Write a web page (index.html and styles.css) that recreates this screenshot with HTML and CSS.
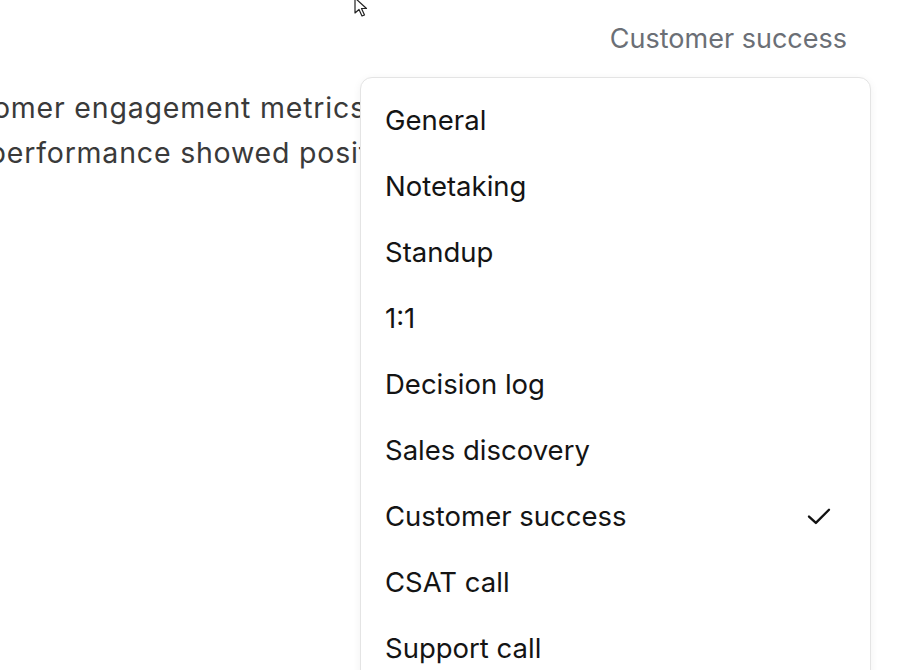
FILE: index.html
```html
<html>

<head>
    <meta http-equiv="Content-Type" content="text/html; charset=utf-8">
    <title>Meeting notes</title>

    <link rel="stylesheet" href="styles.css">
</head>

<body>
    <svg class="cursor" width="16" height="22" viewBox="0 0 16 22">
        <path d="M1 1 L1 16 L5 12.5 L8 19 L10.5 18 L7.5 11.5 L12.5 11.5 Z" fill="#fff" stroke="#222" stroke-width="1.2" stroke-linejoin="round"/>
    </svg>

    <div class="header">
        <div class="template-select">
            <span class="current">Customer success</span>

            <div class="menu">
                <div class="item">General</div>
                <div class="item">Notetaking</div>
                <div class="item">Standup</div>
                <div class="item">1:1</div>
                <div class="item">Decision log</div>
                <div class="item">Sales discovery</div>
                <div class="item selected">
                    <span>Customer success</span>
                    <svg class="check" width="30" height="30" viewBox="0 0 24 24">
                        <path d="M4 12.5 L9.5 17.5 L20 7" fill="none" stroke="#111" stroke-width="1.9" stroke-linecap="round" stroke-linejoin="round"/>
                    </svg>
                </div>
                <div class="item">CSAT call</div>
                <div class="item">Support call</div>
                <div class="item">Retro</div>
            </div>
        </div>
    </div>

    <div class="summary">
        <div class="line">Customer engagement metrics improved this quarter.</div>
        <div class="line">Our performance showed positive growth overall.</div>
    </div>
</body>

</html>
```

FILE: styles.css
```css
body {
    margin: 0;
    font-family: Inter, "Noto Sans", sans-serif;
    background: #fff;
    overflow: hidden;
}

.cursor {
    position: absolute;
    left: 354px;
    top: -3px;
    z-index: 20;
}

.header {
    display: flex;
    justify-content: flex-end;
    padding: 20px 59px 0 0;
}

.template-select {
    position: relative;
}

.current {
    font-size: 27px;
    line-height: 38px;
    color: #6b6f76;
}

.menu {
    position: absolute;
    top: 57px;
    right: -24px;
    width: 509px;
    padding: 9px 0;
    background: #fff;
    border: 1px solid #e4e4e4;
    border-radius: 12px;
    box-shadow: 0 2px 8px rgba(0, 0, 0, 0.06);
    z-index: 10;
}

.item {
    display: flex;
    align-items: center;
    justify-content: space-between;
    height: 66px;
    padding: 0 36px 0 24px;
    font-size: 27.5px;
    color: #141414;
}

.check {
    display: block;
}

.summary {
    margin: 27px 0 0 -72px;
    font-size: 28.5px;
    line-height: 45px;
    letter-spacing: 0.8px;
    color: #3a3a3a;
    white-space: nowrap;
}
```
